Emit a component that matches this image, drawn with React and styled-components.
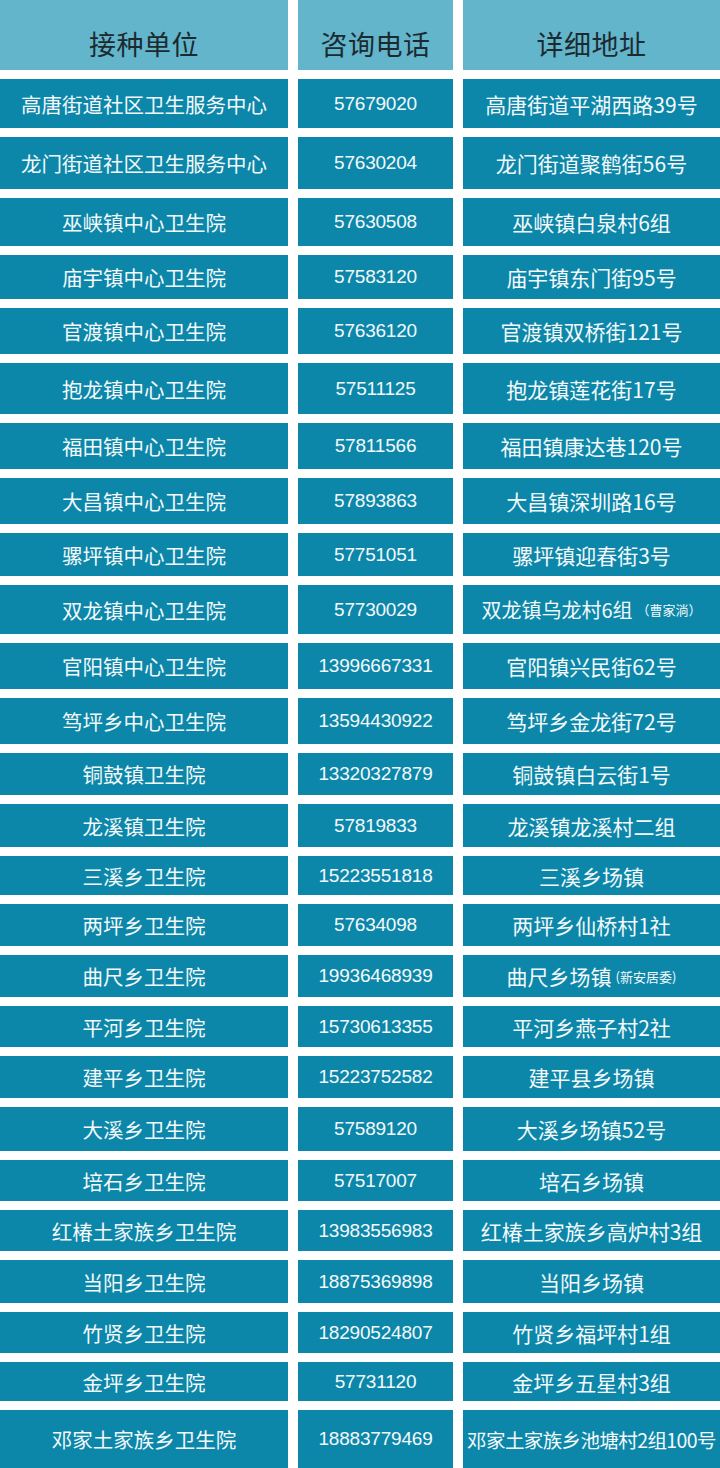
import React from 'react';
import styled, { createGlobalStyle } from 'styled-components';

const GlobalStyle = createGlobalStyle`
  html, body {
    margin: 0;
    padding: 0;
    background: #ffffff;
  }
  body {
    font-family: "Noto Sans CJK SC", "Noto Sans", sans-serif;
  }
`;

const Table = styled.div`
  width: 720px;
  display: flex;
  flex-direction: column;
  gap: 9px;
  background: #ffffff;
`;

const Row = styled.div`
  display: grid;
  grid-template-columns: 288px 155px 1fr;
  column-gap: 10px;
  height: ${(p) => p.$h}px;
`;

const HeadCell = styled.div`
  background: #62b5ca;
  color: #1c2a30;
  font-size: 27px;
  display: flex;
  align-items: center;
  justify-content: center;
  padding-top: 16px;
  box-sizing: border-box;
  letter-spacing: 0.5px;
`;

const Cell = styled.div`
  background: #0c87a9;
  color: #f4f9fb;
  font-size: ${(p) => p.$size || 20.5}px;
  letter-spacing: ${(p) => p.$spacing || 0}px;
  display: flex;
  align-items: center;
  justify-content: center;
  white-space: nowrap;
  overflow: hidden;
`;

const Phone = styled(Cell)`
  font-family: "Liberation Sans", Arial, sans-serif;
  font-size: 19px;
  letter-spacing: -0.2px;
`;

const Note = styled.span`
  font-size: 13px;
  margin-left: 4px;
`;

const rows = [
  ['高唐街道社区卫生服务中心', '57679020', '高唐街道平湖西路39号', null, 49],
  ['龙门街道社区卫生服务中心', '57630204', '龙门街道聚鹤街56号', null, 52],
  ['巫峡镇中心卫生院', '57630508', '巫峡镇白泉村6组', null, 48],
  ['庙宇镇中心卫生院', '57583120', '庙宇镇东门街95号', null, 44],
  ['官渡镇中心卫生院', '57636120', '官渡镇双桥街121号', null, 46],
  ['抱龙镇中心卫生院', '57511125', '抱龙镇莲花街17号', null, 51],
  ['福田镇中心卫生院', '57811566', '福田镇康达巷120号', null, 46],
  ['大昌镇中心卫生院', '57893863', '大昌镇深圳路16号', null, 46],
  ['骡坪镇中心卫生院', '57751051', '骡坪镇迎春街3号', null, 43],
  ['双龙镇中心卫生院', '57730029', '双龙镇乌龙村6组', '（曹家淌）', 49],
  ['官阳镇中心卫生院', '13996667331', '官阳镇兴民街62号', null, 46],
  ['笃坪乡中心卫生院', '13594430922', '笃坪乡金龙街72号', null, 46],
  ['铜鼓镇卫生院', '13320327879', '铜鼓镇白云街1号', null, 42],
  ['龙溪镇卫生院', '57819833', '龙溪镇龙溪村二组', null, 43],
  ['三溪乡卫生院', '15223551818', '三溪乡场镇', null, 39],
  ['两坪乡卫生院', '57634098', '两坪乡仙桥村1社', null, 42],
  ['曲尺乡卫生院', '19936468939', '曲尺乡场镇', '(新安居委)', 42],
  ['平河乡卫生院', '15730613355', '平河乡燕子村2社', null, 41],
  ['建平乡卫生院', '15223752582', '建平县乡场镇', null, 42],
  ['大溪乡卫生院', '57589120', '大溪乡场镇52号', null, 44],
  ['培石乡卫生院', '57517007', '培石乡场镇', null, 41],
  ['红椿土家族乡卫生院', '13983556983', '红椿土家族乡高炉村3组', null, 41],
  ['当阳乡卫生院', '18875369898', '当阳乡场镇', null, 43],
  ['竹贤乡卫生院', '18290524807', '竹贤乡福坪村1组', null, 41],
  ['金坪乡卫生院', '57731120', '金坪乡五星村3组', null, 39],
  ['邓家土家族乡卫生院', '18883779469', '邓家土家族乡池塘村2组100号', null, 58],
];

export default function App() {
  return (
    <>
      <GlobalStyle />
      <Table>
        <Row $h={70}>
          <HeadCell>接种单位</HeadCell>
          <HeadCell>咨询电话</HeadCell>
          <HeadCell>详细地址</HeadCell>
        </Row>
        {rows.map(([name, phone, addr, note, h]) => {
          const long = addr.length > 13 || (note && addr.length > 7);
          return (
            <Row key={name} $h={h}>
              <Cell>{name}</Cell>
              <Phone>{phone}</Phone>
              <Cell $size={addr.length > 13 ? 19.5 : long ? 20 : 21} $spacing={addr.length > 13 ? -0.6 : 0}>
                {addr}
                {note && <Note>{note}</Note>}
              </Cell>
            </Row>
          );
        })}
      </Table>
    </>
  );
}
